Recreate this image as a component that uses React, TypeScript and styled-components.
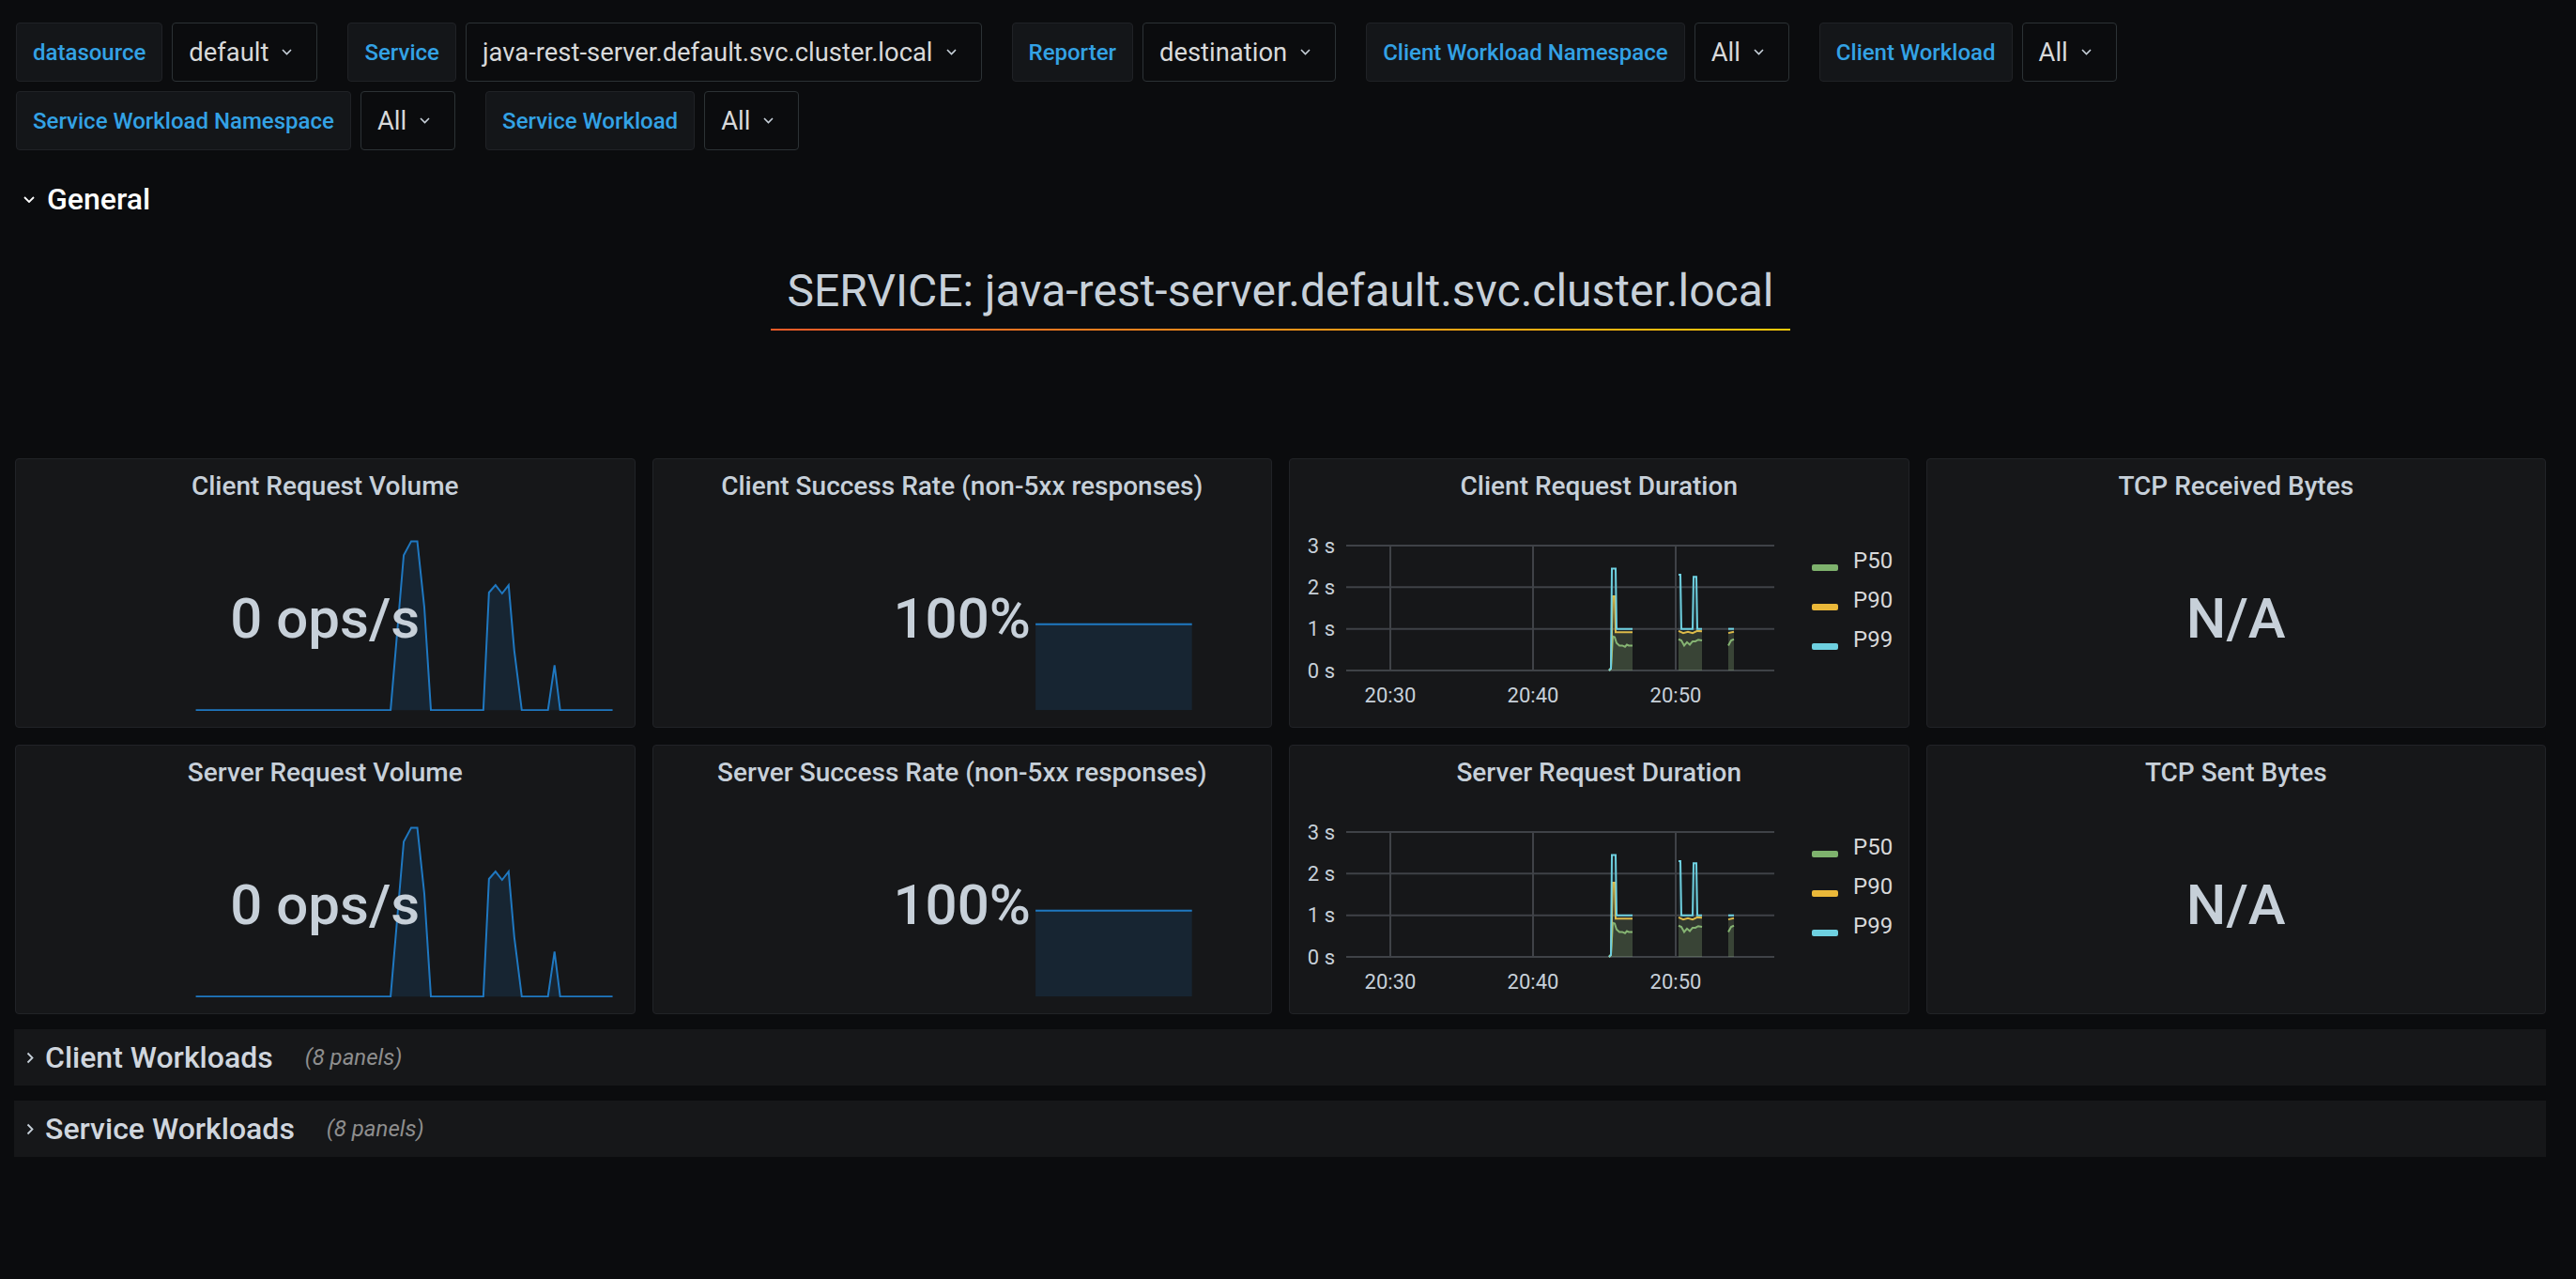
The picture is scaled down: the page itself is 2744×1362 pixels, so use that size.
import React from "react";
import styled, { createGlobalStyle } from "styled-components";

const GlobalStyle = createGlobalStyle`
  html, body { margin: 0; padding: 0; background: #0b0c0e; }
  body { font-family: Roboto, "Helvetica Neue", Arial, sans-serif; color: #c7d0d9; }
  * { box-sizing: border-box; }
`;

const Page = styled.div`
  min-height: 1362px;
  padding: 24px 32px 0 16px;
`;

const VarBar = styled.div`
  display: flex;
  flex-wrap: wrap;
  row-gap: 10px;
  column-gap: 32px;
  padding-left: 1px;
`;

const VarGroup = styled.div`
  display: flex;
  gap: 10px;
`;

const VarLabel = styled.div`
  height: 63px;
  padding: 0 17px;
  display: flex;
  align-items: center;
  background: #141619;
  border: 1px solid #202226;
  border-radius: 4px;
  color: #33a2e5;
  font-size: 24px;
  font-weight: 500;
  white-space: nowrap;
`;

const VarValue = styled.div`
  height: 63px;
  padding: 0 26px 0 17px;
  display: flex;
  align-items: center;
  gap: 14px;
  background: #0b0c0e;
  border: 1px solid #2c3235;
  border-radius: 4px;
  color: #d8d9da;
  font-size: 27.4px;
  font-weight: 400;
  white-space: nowrap;
`;

const SectionHeader = styled.div`
  height: 56px;
  margin-top: 24px;
  padding-left: 9px;
  display: flex;
  align-items: center;
  gap: 13px;
  color: #ffffff;
  font-size: 32px;
  font-weight: 500;
`;

const TextPanel = styled.div`
  height: 230px;
  padding-top: 41px;
  display: flex;
  justify-content: center;
  align-items: flex-start;
`;

const Heading = styled.h1`
  margin: 0;
  padding: 0 18px 11px;
  font-size: 48px;
  line-height: 1.2;
  font-weight: 400;
  color: #c7d0d9;
  border-bottom: 2px solid #f05a28;
  border-image: linear-gradient(90deg, #f05a28, #fbca0a) 1;
`;

const PanelGrid = styled.div`
  margin-top: 18px;
  display: grid;
  grid-template-columns: repeat(4, 1fr);
  grid-auto-rows: 287px;
  gap: 18px;
`;

const Panel = styled.div`
  position: relative;
  display: flex;
  flex-direction: column;
  background: #161719;
  border: 1px solid #212327;
  border-radius: 4px;
  overflow: hidden;
`;

const PanelTitle = styled.div`
  position: relative;
  z-index: 1;
  height: 55px;
  padding-top: 15px;
  text-align: center;
  font-size: 28px;
  line-height: 28px;
  font-weight: 500;
  color: #c7d0d9;
`;

const StatBody = styled.div`
  position: relative;
  z-index: 1;
  flex: 1;
  display: flex;
  align-items: center;
  justify-content: center;
`;

const StatValue = styled.div`
  font-size: 60px;
  line-height: 60px;
  font-weight: 500;
  color: #c7d0d9;
`;

const Overlay = styled.svg`
  position: absolute;
  top: 0;
  left: 0;
  width: 100%;
  height: 100%;
  z-index: 0;
`;

const GraphBody = styled.div`
  flex: 1;
  display: flex;
  align-items: flex-start;
`;

const GraphSvg = styled.svg`
  flex: none;
  width: 545px;
  height: 230px;
  font-family: Roboto, sans-serif;
`;

const Legend = styled.div`
  margin-left: 11px;
  padding-top: 32px;
  display: flex;
  flex-direction: column;
`;

const LegendItem = styled.div`
  height: 42px;
  display: flex;
  align-items: center;
  gap: 16px;
  font-size: 24px;
  color: #d8d9da;
`;

const Swatch = styled.span<{ $color: string }>`
  width: 28px;
  height: 7px;
  margin-top: 14px;
  border-radius: 2px;
  background: ${(p) => p.$color};
`;

const RowList = styled.div`
  margin-top: 16px;
  margin-left: -1px;
  display: flex;
  flex-direction: column;
  gap: 16px;
`;

const RowBar = styled.div`
  height: 60px;
  padding-left: 13px;
  display: flex;
  align-items: center;
  background: #161719;
`;

const RowTitle = styled.span`
  margin-left: 12px;
  font-size: 32px;
  font-weight: 500;
  color: #d0d6de;
`;

const RowCount = styled.span`
  margin-left: 34px;
  font-size: 24px;
  font-style: italic;
  color: #8e8e8e;
`;

const Chevron = ({ color = "#c7d0d9" }: { color?: string }) => (
  <svg width="11" height="7" viewBox="0 0 11 7">
    <path d="M1 1 L5.5 5.5 L10 1" fill="none" stroke={color} strokeWidth="1.6" />
  </svg>
);

const ChevronRight = () => (
  <svg width="8" height="13" viewBox="0 0 8 13">
    <path d="M1.5 1.5 L6.5 6.5 L1.5 11.5" fill="none" stroke="#c7d0d9" strokeWidth="1.8" />
  </svg>
);

const ChevronDownLarge = () => (
  <svg width="12" height="7" viewBox="0 0 12 7">
    <path d="M1 1 L6 6 L11 1" fill="none" stroke="#ffffff" strokeWidth="1.8" />
  </svg>
);

const vars: [string, string][] = [
  ["datasource", "default"],
  ["Service", "java-rest-server.default.svc.cluster.local"],
  ["Reporter", "destination"],
  ["Client Workload Namespace", "All"],
  ["Client Workload", "All"],
  ["Service Workload Namespace", "All"],
  ["Service Workload", "All"],
];

const sparkPts: [number, number][] = [
  [192, 269], [400, 269], [414, 103], [422, 88], [428.5, 88], [436, 159], [443, 269],
  [499, 269], [505, 143], [512, 135], [519, 144], [526, 135], [532, 205], [540, 269],
  [568, 269], [575, 221], [581, 269], [637, 269],
];

const Sparkline = () => (
  <Overlay viewBox="0 0 660 287" preserveAspectRatio="none">
    <polygon
      points={sparkPts.map((p) => p.join(",")).join(" ")}
      fill="rgba(31,120,193,0.15)"
    />
    <polyline
      points={sparkPts.map((p) => p.join(",")).join(" ")}
      fill="none"
      stroke="#1f78c1"
      strokeWidth="2"
    />
  </Overlay>
);

const RateBar = () => (
  <Overlay viewBox="0 0 660 287" preserveAspectRatio="none">
    <rect x="408" y="176" width="167" height="93" fill="rgba(31,120,193,0.15)" />
    <line x1="408" y1="177" x2="575" y2="177" stroke="#1f78c1" strokeWidth="2" />
  </Overlay>
);

const yS = (v: number) => 170 - v * 44.33;

type Block = [number, number][];
const series: { name: string; color: string; blocks: Block[] }[] = [
  {
    name: "P50",
    color: "#7eb26d",
    blocks: [
      [[340, 0], [342, 0.05], [344, 0.82], [346, 0.8], [348, 0.66], [351, 0.6], [354, 0.6], [357, 0.57], [359, 0.62], [361, 0.6], [365, 0.6]],
      [[414, 0.75], [417, 0.72], [420, 0.6], [423, 0.68], [426, 0.62], [429, 0.7], [432, 0.7], [435, 0.74], [439, 0.72]],
      [[467, 0.6], [470, 0.72], [473, 0.75]],
    ],
  },
  {
    name: "P90",
    color: "#eab839",
    blocks: [
      [[340, 0], [342, 0.05], [344, 1.78], [346, 1.78], [347, 0.92], [365, 0.92]],
      [[414, 0.95], [419, 0.9], [424, 0.93], [429, 0.9], [434, 0.95], [439, 0.94]],
      [[467, 0.9], [473, 0.93]],
    ],
  },
  {
    name: "P99",
    color: "#6ed0e0",
    blocks: [
      [[340, 0], [342, 0.05], [343, 2.45], [347, 2.45], [348, 1.0], [365, 1.0]],
      [[414, 2.3], [416, 2.3], [417, 1.0], [429, 1.0], [430, 2.25], [433, 2.25], [434, 1.0], [439, 1.0]],
      [[467, 1.0], [473, 1.0]],
    ],
  },
];

const gridY = [3, 2, 1, 0];
const gridX: [number, string][] = [[107, "20:30"], [259, "20:40"], [411, "20:50"]];

const DurationGraph = () => (
  <GraphBody>
    <GraphSvg viewBox="0 0 545 230">
      {gridY.map((v) => (
        <g key={v}>
          <line x1="60" x2="516" y1={yS(v)} y2={yS(v)} stroke="#3f4247" strokeWidth="2" />
          <text x="48" y={yS(v)} dominantBaseline="central" textAnchor="end" fontSize="22" fill="#c7d0d9">
            {v} s
          </text>
        </g>
      ))}
      {gridX.map(([x, label]) => (
        <g key={label}>
          <line x1={x} x2={x} y1={yS(3)} y2={yS(0)} stroke="#3f4247" strokeWidth="2" />
          <text x={x} y="204" textAnchor="middle" fontSize="22" fill="#c7d0d9">
            {label}
          </text>
        </g>
      ))}
      {series.map((s) =>
        s.blocks.map((b, i) => {
          const pts = b.map(([x, v]) => `${x},${yS(v)}`).join(" ");
          const poly = `${b[0][0]},${yS(0)} ${pts} ${b[b.length - 1][0]},${yS(0)}`;
          return (
            <g key={s.name + i}>
              <polygon points={poly} fill={s.color} fillOpacity="0.1" />
              <polyline points={pts} fill="none" stroke={s.color} strokeWidth="2" />
            </g>
          );
        })
      )}
    </GraphSvg>
    <Legend>
      {series.map((s) => (
        <LegendItem key={s.name}>
          <Swatch $color={s.color} />
          {s.name}
        </LegendItem>
      ))}
    </Legend>
  </GraphBody>
);

const StatPanel = ({ title, value, kind }: { title: string; value: string; kind?: "spark" | "bar" }) => (
  <Panel>
    {kind === "spark" && <Sparkline />}
    {kind === "bar" && <RateBar />}
    <PanelTitle>{title}</PanelTitle>
    <StatBody>
      <StatValue>{value}</StatValue>
    </StatBody>
  </Panel>
);

const GraphPanel = ({ title }: { title: string }) => (
  <Panel>
    <PanelTitle>{title}</PanelTitle>
    <DurationGraph />
  </Panel>
);

export default function App() {
  return (
    <>
      <GlobalStyle />
      <Page>
        <VarBar>
          {vars.map(([label, value]) => (
            <VarGroup key={label}>
              <VarLabel>{label}</VarLabel>
              <VarValue>
                {value}
                <Chevron />
              </VarValue>
            </VarGroup>
          ))}
        </VarBar>

        <SectionHeader>
          <ChevronDownLarge />
          General
        </SectionHeader>

        <TextPanel>
          <Heading>SERVICE: java-rest-server.default.svc.cluster.local</Heading>
        </TextPanel>

        <PanelGrid>
          <StatPanel title="Client Request Volume" value="0 ops/s" kind="spark" />
          <StatPanel title="Client Success Rate (non-5xx responses)" value="100%" kind="bar" />
          <GraphPanel title="Client Request Duration" />
          <StatPanel title="TCP Received Bytes" value="N/A" />
          <StatPanel title="Server Request Volume" value="0 ops/s" kind="spark" />
          <StatPanel title="Server Success Rate (non-5xx responses)" value="100%" kind="bar" />
          <GraphPanel title="Server Request Duration" />
          <StatPanel title="TCP Sent Bytes" value="N/A" />
        </PanelGrid>

        <RowList>
          <RowBar>
            <ChevronRight />
            <RowTitle>Client Workloads</RowTitle>
            <RowCount>(8 panels)</RowCount>
          </RowBar>
          <RowBar>
            <ChevronRight />
            <RowTitle>Service Workloads</RowTitle>
            <RowCount>(8 panels)</RowCount>
          </RowBar>
        </RowList>
      </Page>
    </>
  );
}
